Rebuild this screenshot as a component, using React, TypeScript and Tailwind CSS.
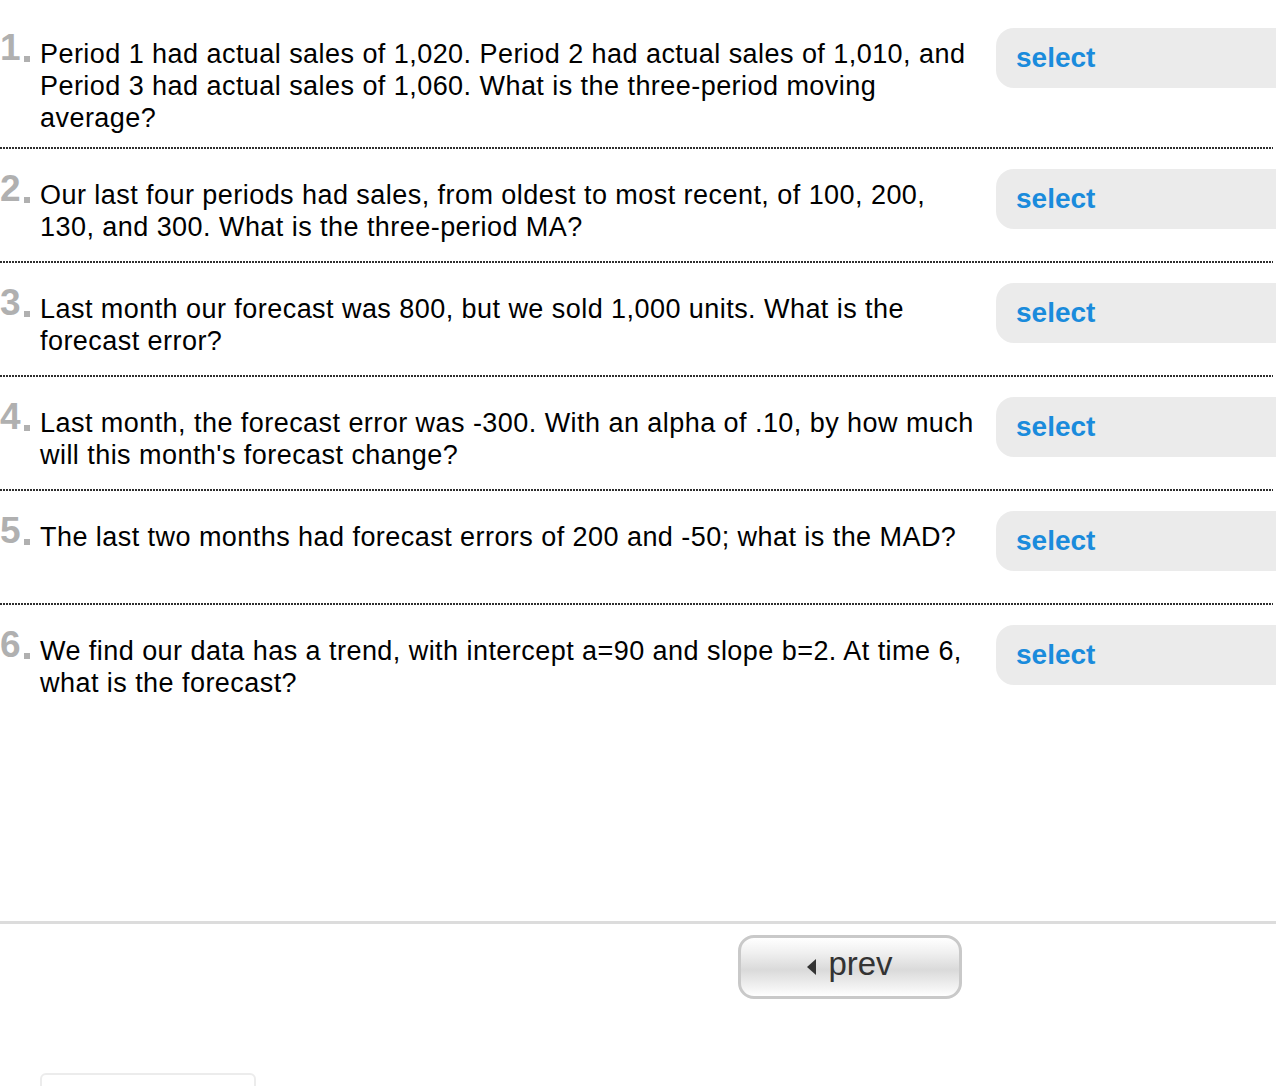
import React from "react";

const questions = [
  "Period 1 had actual sales of 1,020. Period 2 had actual sales of 1,010, and Period 3 had actual sales of 1,060. What is the three-period moving average?",
  "Our last four periods had sales, from oldest to most recent, of 100, 200, 130, and 300. What is the three-period MA?",
  "Last month our forecast was 800, but we sold 1,000 units. What is the forecast error?",
  "Last month, the forecast error was -300. With an alpha of .10, by how much will this month's forecast change?",
  "The last two months had forecast errors of 200 and -50; what is the MAD?",
  "We find our data has a trend, with intercept a=90 and slope b=2. At time 6, what is the forecast?",
];

function Dots() {
  return (
    <div className="h-[2px] w-[1273px] bg-[repeating-linear-gradient(90deg,#2e2e2e_0_2px,transparent_2px_3px)]" />
  );
}

function QuestionRow({ n, text }: { n: number; text: string }) {
  return (
    <div className="flex items-start pt-[20px] pb-[13px]">
      <div className="flex w-[40px] shrink-0 items-end pt-[4px] text-[37px] font-bold leading-[32px] text-[#b0b0b0]">
        {n}
        <span className="mb-[2px] ml-[3px] inline-block h-[6px] w-[6px] bg-[#b0b0b0]" />
      </div>
      <p className="mt-[10px] w-[940px] shrink-0 text-[27px] leading-[32px] tracking-[0.45px] text-black">
        {text}
      </p>
      <button
        type="button"
        className="mb-[19px] ml-[16px] flex h-[60px] w-[280px] shrink-0 items-center rounded-l-[18px] bg-[#ebebeb] pl-[20px] text-[28px] font-bold text-[#1a8bdc]"
      >
        select
      </button>
    </div>
  );
}

export default function App() {
  return (
    <div className="relative h-[1086px] w-[1276px] overflow-hidden bg-white font-['Liberation_Sans',Arial,sans-serif]">
      <div className="pt-[8px]">
        {questions.map((q, i) => (
          <div key={i}>
            <QuestionRow n={i + 1} text={q} />
            {i < questions.length - 1 ? <Dots /> : null}
          </div>
        ))}
      </div>

      <div className="mt-[204px] h-[3px] w-full bg-[#dcdcdc]" />

      <div className="ml-[738px] mt-[11px]">
        <button
          type="button"
          className="flex h-[64px] w-[224px] items-center justify-center gap-[12px] rounded-[16px] border-[3px] border-[#c9c9c9] bg-[linear-gradient(180deg,#ffffff_0%,#f0f0f0_25%,#dadada_55%,#f2f2f2_85%,#ffffff_100%)] text-[33px] text-[#333]"
        >
          <span className="inline-block h-0 w-0 border-y-[8px] border-r-[9px] border-y-transparent border-r-[#333]" />
          <span className="-mt-[6px]">prev</span>
        </button>
      </div>

      <div className="ml-[40px] mt-[74px] h-[40px] w-[216px] rounded-t-[6px] border-2 border-[#ececec]" />
    </div>
  );
}
